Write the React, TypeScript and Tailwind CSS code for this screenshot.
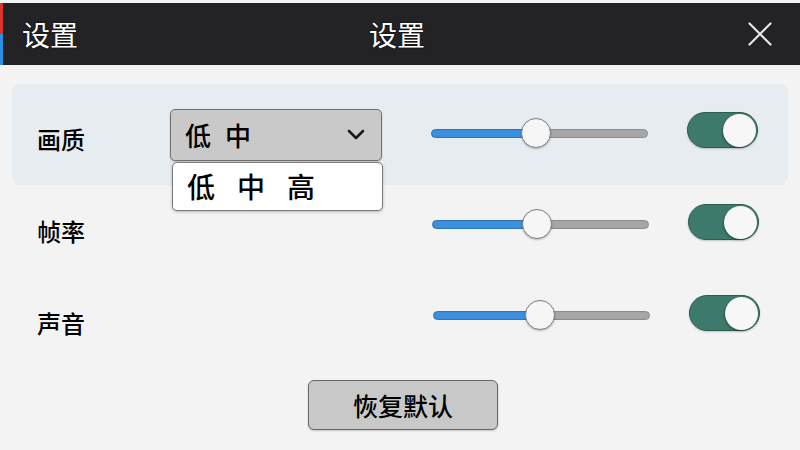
import React from "react";

const cjk = { fontFamily: '"Noto Sans CJK SC", "Noto Sans", sans-serif' };

function Slider({ fill }: { fill: number }) {
  return (
    <div className="relative w-[217px] h-[30px] flex items-center">
      <div className="flex w-full h-[9px]">
        <div
          className="h-full rounded-l-full bg-[#3b8fdd] border border-[#2c74b8]"
          style={{ width: fill }}
        />
        <div className="h-full flex-1 rounded-r-full bg-[#a6a6a6] border border-[#8c8c8c]" />
      </div>
      <div
        className="absolute top-0 w-[30px] h-[30px] rounded-full bg-[#f6f6f6] border-[1.5px] border-[#7e7e7e] shadow-[0_1px_2px_rgba(0,0,0,0.25)]"
        style={{ left: fill - 4 }}
      />
    </div>
  );
}

function Toggle() {
  return (
    <div className="w-[71px] h-[36px] rounded-full bg-[#3d7a6b] border border-[#2c5d51] flex items-center justify-end pr-[1px] shadow-[0_1px_2px_rgba(0,0,0,0.2)]">
      <div className="w-[33px] h-[33px] rounded-full bg-[#f7f7f7] shadow-[-1px_1px_2px_rgba(0,0,0,0.3)]" />
    </div>
  );
}

export default function App() {
  return (
    <div className="w-[800px] h-[450px] bg-[#f3f3f3] overflow-hidden" style={cjk}>
      {/* title bar */}
      <div className="mt-[3px] h-[62px] bg-[#232326] flex items-center relative">
        <div className="w-[3px] h-full flex flex-col">
          <div className="flex-1 bg-[#d9352b]" />
          <div className="flex-1 bg-[#2f8ee0]" />
        </div>
        <div className="pl-[19px] text-[28px] text-white leading-none [text-shadow:0_0_2px_#000]">设置</div>
        <div className="flex-1 flex justify-center pr-[22px] text-[28px] text-white leading-none [text-shadow:0_0_2px_#000]">
          设置
        </div>
        <div className="pr-[28px] pl-[10px] flex items-center">
          <svg width="24" height="24" viewBox="0 0 24 24">
            <path d="M1.5 1.5 L22.5 22.5 M22.5 1.5 L1.5 22.5" stroke="#e6e6e6" strokeWidth="2.2" strokeLinecap="round" />
          </svg>
        </div>
      </div>

      <div className="px-[12px] pt-[19px]">
        {/* 画质 */}
        <div className="h-[101px] rounded-[8px] bg-[#e7ecf1] flex items-center pl-[25px] pr-[15px]">
          <div className="w-[133px] mt-[9px] text-[24px] font-medium text-black leading-none">画质</div>
          <div className="relative w-[212px]">
            <div className="h-[52px] rounded-[5px] bg-[#c9c9c9] border-[1.5px] border-[#6f6f6f] flex items-center pl-[14px] pr-[16px] shadow-[0_1px_2px_rgba(0,0,0,0.2)]">
              <div className="flex gap-[14px] text-[26px] font-medium text-black leading-none">
                <span>低</span>
                <span>中</span>
              </div>
              <div className="flex-1" />
              <svg width="18" height="11" viewBox="0 0 18 11">
                <path d="M2 2 L9 9 L16 2" stroke="#1a1a1a" strokeWidth="2.6" fill="none" strokeLinecap="round" strokeLinejoin="round" />
              </svg>
            </div>
            <div className="absolute left-[2px] top-[53px] w-[211px] h-[49px] rounded-[5px] bg-white border-[1.5px] border-[#7a7a7a] flex items-center pl-[14px] shadow-[0_1px_3px_rgba(0,0,0,0.25)]">
              <div className="flex gap-[22px] text-[28px] font-medium text-black leading-none">
                <span>低</span>
                <span>中</span>
                <span>高</span>
              </div>
            </div>
          </div>
          <div className="ml-[49px] mb-[3px]">
            <Slider fill={94} />
          </div>
          <div className="ml-[39px] mb-[9px]">
            <Toggle />
          </div>
        </div>

        {/* 帧率 */}
        <div className="h-[78px] flex items-center pl-[25px]">
          <div className="w-[133px] mt-[14px] text-[24px] font-medium text-black leading-none">帧率</div>
          <div className="w-[212px]" />
          <div className="ml-[50px]">
            <Slider fill={94} />
          </div>
          <div className="ml-[39px] mb-[4px]">
            <Toggle />
          </div>
        </div>

        {/* 声音 */}
        <div className="h-[104px] flex items-center pl-[25px]">
          <div className="w-[133px] mt-[16px] text-[24px] font-medium text-black leading-none">声音</div>
          <div className="w-[212px]" />
          <div className="ml-[51px]">
            <Slider fill={96} />
          </div>
          <div className="ml-[39px] mb-[4px]">
            <Toggle />
          </div>
        </div>

        <div className="mt-[13px] flex justify-center pl-[6px]">
          <div className="w-[190px] h-[50px] rounded-[6px] bg-[#c8c8c8] border-[1.5px] border-[#666] flex items-center justify-center text-[25px] font-medium text-black leading-none shadow-[0_1px_2px_rgba(0,0,0,0.2)]">
            恢复默认
          </div>
        </div>
      </div>
    </div>
  );
}
